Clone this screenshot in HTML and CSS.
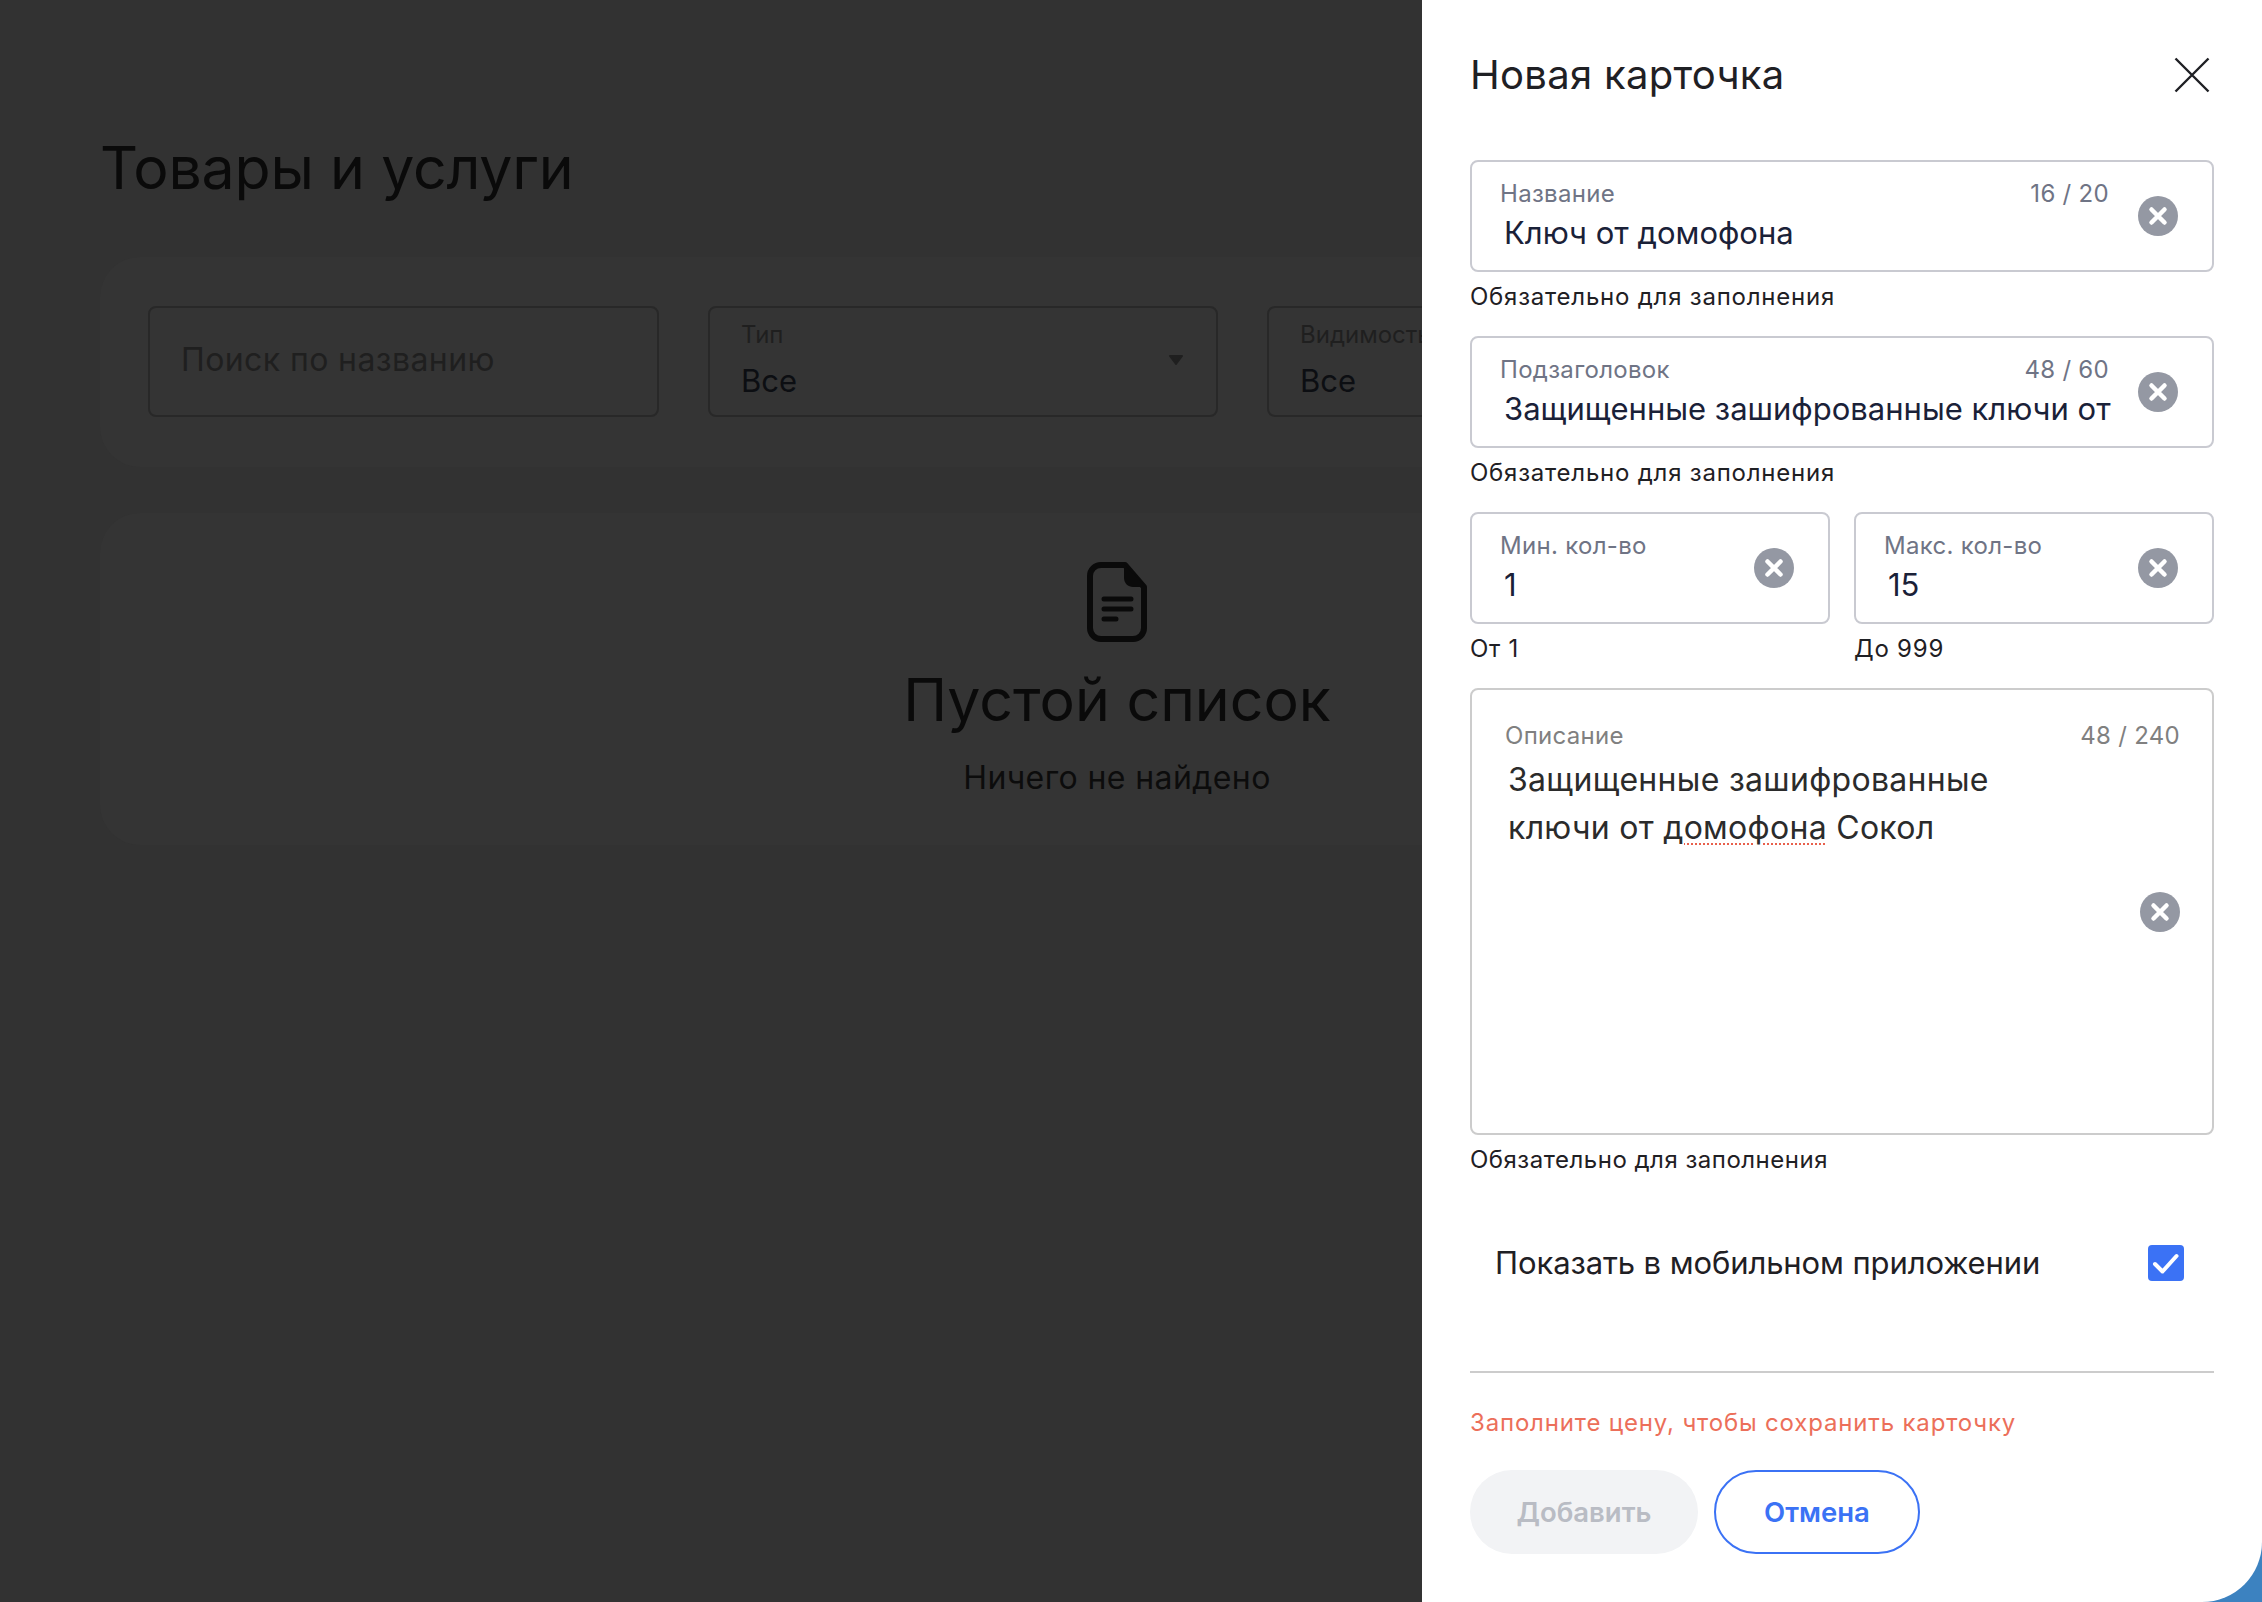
FILE: index.html
```html
<!DOCTYPE html>
<html lang="ru">
<head>
    <meta charset="UTF-8">
    <meta name="viewport" content="width=device-width, initial-scale=1.0">
    <title>Товары и услуги</title>
    <link rel="stylesheet" href="styles.css">
</head>
<body>
    <div class="app">
        <main class="page">
            <div class="page-inner">
                <h1 class="page-title">Товары и услуги</h1>

                <section class="card filters">
                    <div class="filter filter-search">
                        <span class="filter-placeholder">Поиск по названию</span>
                    </div>
                    <div class="filter">
                        <span class="filter-label">Тип</span>
                        <span class="filter-value">Все</span>
                        <svg class="filter-arrow" width="16" height="10" viewBox="0 0 16 10"><path d="M2 1h12l-6 8z" fill="#1f1f1f" stroke="#1f1f1f" stroke-width="2" stroke-linejoin="round"/></svg>
                    </div>
                    <div class="filter">
                        <span class="filter-label">Видимость</span>
                        <span class="filter-value">Все</span>
                    </div>
                </section>

                <section class="card empty">
                    <svg class="empty-icon" width="60" height="80" viewBox="0 0 60 80" fill="none">
                        <path d="M38 3H14C7.9 3 3 7.9 3 14v52c0 6.100 4.900 11 11 11h32c6.100 0 11-4.900 11-11V25z" stroke="#0a0a0a" stroke-width="6" stroke-linejoin="round"/>
                        <path d="M37 2l22 23H46c-5 0-9-4-9-9z" fill="#0a0a0a"/>
                        <path d="M17 37h27M17 47h27M17 57h12" stroke="#0a0a0a" stroke-width="5" stroke-linecap="round"/>
                    </svg>
                    <h2 class="empty-title">Пустой список</h2>
                    <p class="empty-text">Ничего не найдено</p>
                </section>
            </div>
        </main>

        <aside class="panel">
            <div class="panel-head">
                <h2 class="panel-title">Новая карточка</h2>
                <svg class="panel-close" width="36" height="36" viewBox="0 0 36 36"><path d="M1.500 1.500l33 33M34.500 1.500l-33 33" stroke="#1f2024" stroke-width="2.400" fill="none"/></svg>
            </div>

            <div class="group">
                <div class="field">
                    <div class="field-main">
                        <div class="field-top"><span class="field-label">Название</span><span class="field-count">16 / 20</span></div>
                        <div class="field-value">Ключ от домофона</div>
                    </div>
                    <svg class="clear" width="40" height="40" viewBox="0 0 40 40"><circle cx="20" cy="20" r="20" fill="#9498a3"/><path d="M13.500 13.500l13 13M26.500 13.500l-13 13" stroke="#fff" stroke-width="4.500" stroke-linecap="round"/></svg>
                </div>
                <p class="helper helper-wide">Обязательно для заполнения</p>
            </div>

            <div class="group">
                <div class="field">
                    <div class="field-main">
                        <div class="field-top"><span class="field-label">Подзаголовок</span><span class="field-count">48 / 60</span></div>
                        <div class="field-value">Защищенные зашифрованные ключи от</div>
                    </div>
                    <svg class="clear" width="40" height="40" viewBox="0 0 40 40"><circle cx="20" cy="20" r="20" fill="#9498a3"/><path d="M13.500 13.500l13 13M26.500 13.500l-13 13" stroke="#fff" stroke-width="4.500" stroke-linecap="round"/></svg>
                </div>
                <p class="helper helper-wide">Обязательно для заполнения</p>
            </div>

            <div class="group group-row">
                <div class="group-col">
                    <div class="field">
                        <div class="field-main">
                            <div class="field-top"><span class="field-label">Мин. кол-во</span></div>
                            <div class="field-value">1</div>
                        </div>
                        <svg class="clear" width="40" height="40" viewBox="0 0 40 40"><circle cx="20" cy="20" r="20" fill="#9498a3"/><path d="M13.500 13.500l13 13M26.500 13.500l-13 13" stroke="#fff" stroke-width="4.500" stroke-linecap="round"/></svg>
                    </div>
                    <p class="helper helper-wide">От 1</p>
                </div>
                <div class="group-col">
                    <div class="field">
                        <div class="field-main">
                            <div class="field-top"><span class="field-label">Макс. кол-во</span></div>
                            <div class="field-value">15</div>
                        </div>
                        <svg class="clear" width="40" height="40" viewBox="0 0 40 40"><circle cx="20" cy="20" r="20" fill="#9498a3"/><path d="M13.500 13.500l13 13M26.500 13.500l-13 13" stroke="#fff" stroke-width="4.500" stroke-linecap="round"/></svg>
                    </div>
                    <p class="helper helper-wide">До 999</p>
                </div>
            </div>

            <div class="area">
                <div class="area-top"><span class="area-label">Описание</span><span class="area-count">48 / 240</span></div>
                <div class="area-text">Защищенные зашифрованные<br>ключи от <span class="misspelled">домофона</span> Сокол</div>
                <svg class="clear area-clear" width="40" height="40" viewBox="0 0 40 40"><circle cx="20" cy="20" r="20" fill="#9498a3"/><path d="M13.500 13.500l13 13M26.500 13.500l-13 13" stroke="#fff" stroke-width="4.500" stroke-linecap="round"/></svg>
            </div>
            <p class="helper">Обязательно для заполнения</p>

            <div class="toggle-row">
                <span class="toggle-text">Показать в мобильном приложении</span>
                <span class="checkbox">
                    <svg width="36" height="36" viewBox="0 0 36 36"><path d="M7 19l7.500 7.500L28.500 11" stroke="#fff" stroke-width="4" fill="none" stroke-linecap="round" stroke-linejoin="round"/></svg>
                </span>
            </div>

            <hr class="divider">

            <p class="form-error">Заполните цену, чтобы сохранить карточку</p>

            <div class="actions">
                <button class="btn btn-add" type="button" disabled>Добавить</button>
                <button class="btn btn-cancel" type="button">Отмена</button>
            </div>
        </aside>
    </div>
</body>
</html>
```

FILE: styles.css
```css
/* Общие стили */
* {
    box-sizing: border-box;
}

html, body {
    margin: 0;
    height: 100%;
}

body {
    font-family: Inter, "Noto Sans", sans-serif;
    background-color: #3c82c0;
    overflow: hidden;
}

.app {
    display: flex;
    height: 1602px;
}

/* Затемнённая страница под панелью */
.page {
    width: 1422px;
    flex-shrink: 0;
    overflow: hidden;
    background-color: #323232;
}

.page-inner {
    width: 2034px;
    margin-left: 100px;
    padding-top: 130px;
}

.page-title {
    margin: 0 0 51px;
    font-size: 59px;
    line-height: 76px;
    letter-spacing: -0.2px;
    font-weight: 400;
    color: #0a0a0a;
}

.card {
    background-color: #343434;
    border-radius: 40px;
}

.filters {
    display: flex;
    gap: 49px;
    height: 210px;
    padding: 49px 48px;
    margin-bottom: 46px;
}

.filter {
    width: 510px;
    height: 111px;
    flex-shrink: 0;
    position: relative;
    display: flex;
    flex-direction: column;
    padding: 13px 31px 0;
    border: 2px solid #282828;
    border-radius: 8px;
}

.filter-search {
    width: 511px;
    justify-content: center;
    padding: 0 31px 4px;
}

.filter-placeholder {
    font-size: 32px;
    line-height: 40px;
    letter-spacing: 0.4px;
    color: #1f1f1f;
}

.filter-label {
    font-size: 24px;
    line-height: 28px;
    color: #1f1f1f;
}

.filter-value {
    margin-top: 12px;
    font-size: 31px;
    line-height: 40px;
    color: #0c0e12;
}

.filter-arrow {
    position: absolute;
    right: 32px;
    top: 47px;
}

.empty {
    height: 332px;
    display: flex;
    flex-direction: column;
    align-items: center;
    padding-top: 49px;
}

.empty-title {
    margin: 20px 0 0;
    font-size: 59px;
    line-height: 76px;
    font-weight: 400;
    color: #0a0a0a;
}

.empty-text {
    margin: 20px 0 0;
    font-size: 32px;
    line-height: 40px;
    letter-spacing: 0.4px;
    color: #0c0c0c;
}

/* Панель создания карточки */
.panel {
    width: 840px;
    flex-shrink: 0;
    padding: 0 48px;
    background-color: #fff;
    border-bottom-right-radius: 60px;
}

.panel-head {
    display: flex;
    justify-content: space-between;
    align-items: center;
    height: 160px;
    padding-bottom: 10px;
}

.panel-title {
    margin: 0;
    font-size: 40px;
    line-height: 50px;
    letter-spacing: 0.3px;
    font-weight: 400;
    color: #1f2024;
}

.panel-close {
    margin-right: 4px;
}

.group {
    margin-bottom: 25px;
}

.group-row {
    display: flex;
    gap: 24px;
}

.group-col {
    flex: 1;
    min-width: 0;
}

.field {
    display: flex;
    align-items: center;
    height: 112px;
    padding: 0 34px 0 28px;
    border: 2px solid #c9cad1;
    border-radius: 8px;
}

.field-main {
    flex: 1;
    min-width: 0;
    padding-right: 29px;
}

.field-top {
    display: flex;
    justify-content: space-between;
    font-size: 24px;
    line-height: 28px;
    letter-spacing: 0.3px;
    color: #6f7485;
}

.field-value {
    margin-top: 5px;
    padding-left: 4px;
    white-space: nowrap;
    font-size: 31px;
    line-height: 40px;
    color: #1a2138;
}

.clear {
    flex-shrink: 0;
}

.helper {
    margin: 11px 0 0;
    font-size: 24px;
    line-height: 28px;
    letter-spacing: 0.5px;
    color: #1f2024;
}

.helper-wide {
    letter-spacing: 0.77px;
}

.area {
    display: flex;
    flex-direction: column;
    height: 447px;
    padding: 32px 32px 0 33px;
    border: 2px solid #cccccc;
    border-radius: 8px;
}

.area-top {
    display: flex;
    justify-content: space-between;
    font-size: 24px;
    line-height: 28px;
    letter-spacing: 0.3px;
    color: #808080;
}

.area-text {
    margin-top: 6px;
    padding-left: 3px;
    font-size: 32px;
    line-height: 48px;
    letter-spacing: 0.3px;
    color: #2b2b2b;
}

.misspelled {
    text-decoration: underline dotted #e8604c 2px;
    text-underline-offset: 4px;
}

.area-clear {
    align-self: flex-end;
    margin-top: 40px;
}

.toggle-row {
    display: flex;
    justify-content: space-between;
    align-items: center;
    height: 60px;
    margin-top: 59px;
    padding: 0 30px 0 25px;
}

.toggle-text {
    font-size: 31px;
    line-height: 40px;
    letter-spacing: -0.1px;
    color: #1f2024;
}

.checkbox {
    display: block;
    width: 36px;
    height: 36px;
    background-color: #3b72f5;
    border-radius: 4px;
}

.checkbox svg {
    display: block;
}

.divider {
    height: 2px;
    margin: 78px 0 0;
    border: none;
    background-color: #cccccc;
}

.form-error {
    margin: 36px 0 0;
    font-size: 24px;
    line-height: 28px;
    letter-spacing: 0.83px;
    color: #ec6f5a;
}

.actions {
    display: flex;
    gap: 16px;
    margin-top: 33px;
}

.btn {
    height: 84px;
    border-radius: 42px;
    font-family: inherit;
    font-size: 27.5px;
    font-weight: 600;
}

.btn-add {
    width: 228px;
    border: none;
    background-color: #f2f3f5;
    color: #b9bcc4;
}

.btn-cancel {
    width: 206px;
    border: 2px solid #3b72f5;
    background-color: #fff;
    color: #3b72f5;
}
```
